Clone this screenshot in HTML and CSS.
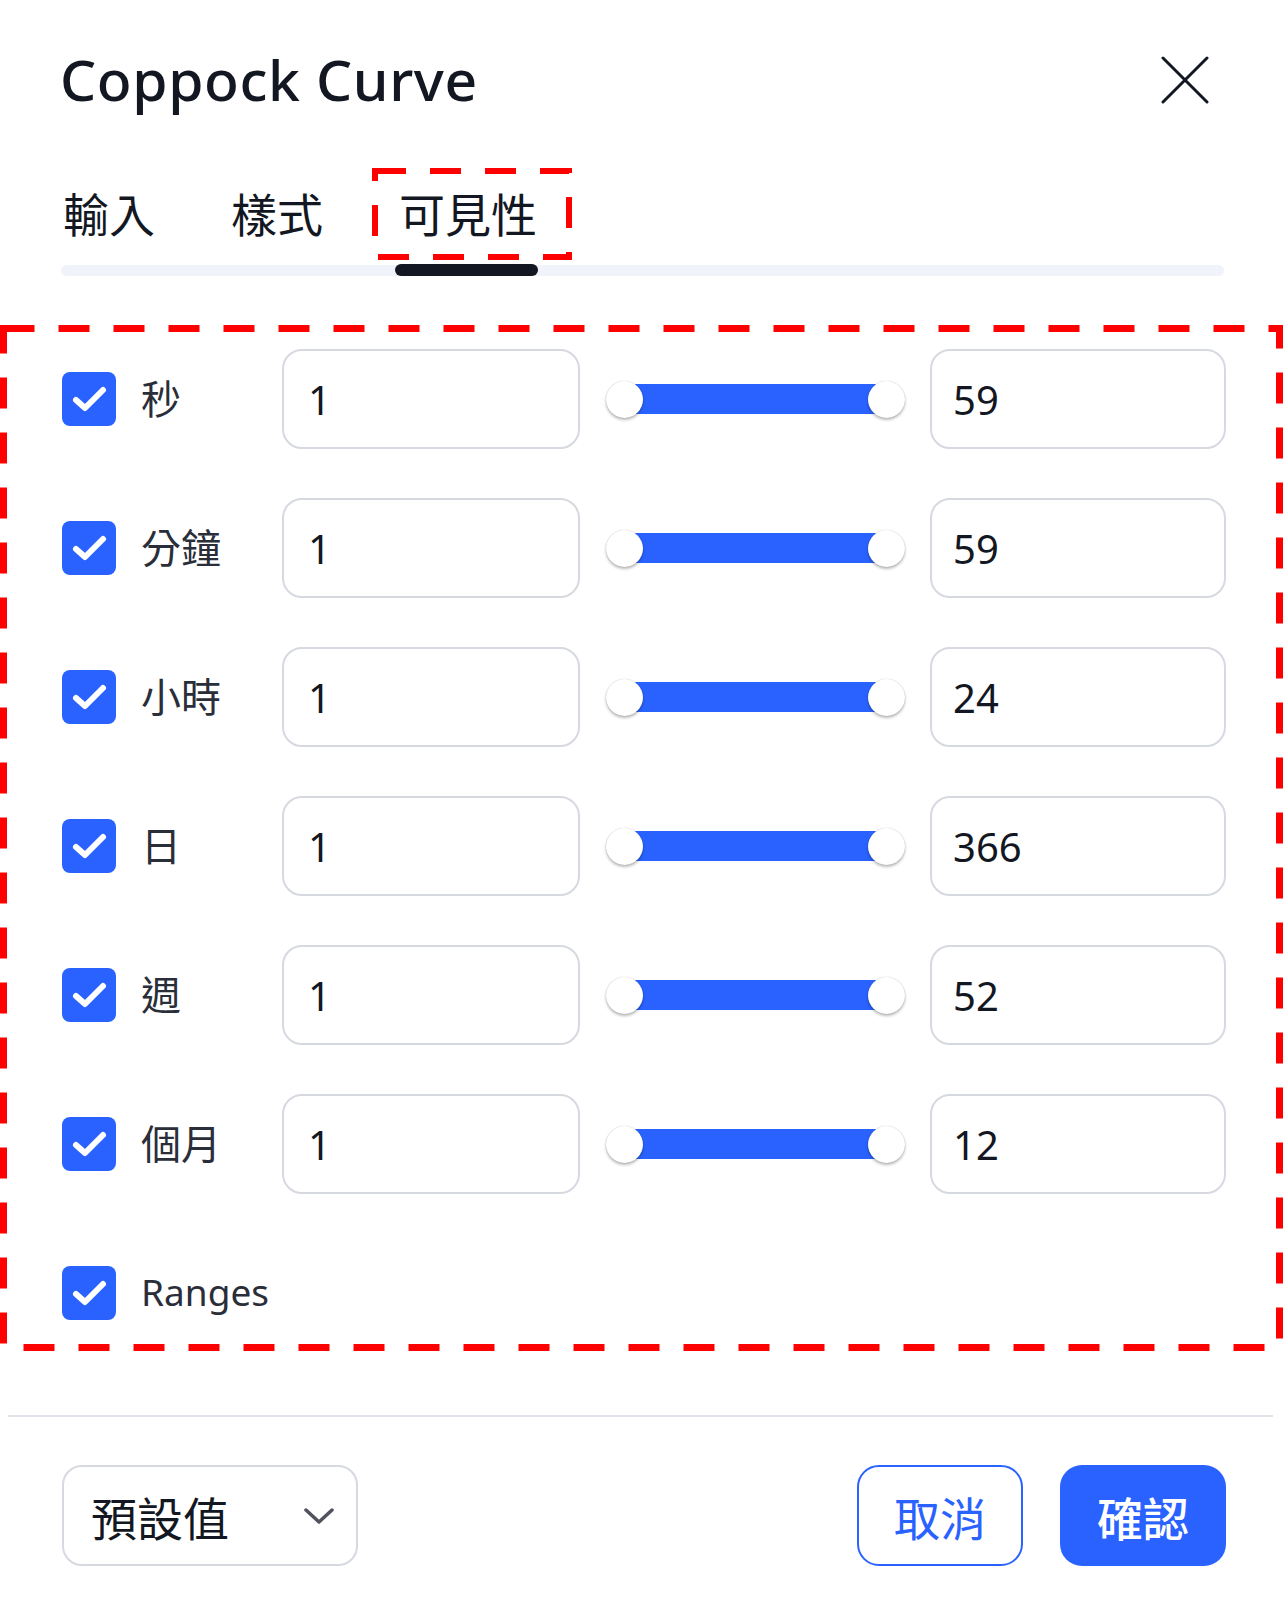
FILE: index.html
```html
<!DOCTYPE html>
<html lang="zh-Hant">
<head>
<meta charset="utf-8">
<title>Coppock Curve</title>
<link rel="stylesheet" href="styles.css">
</head>
<body>
<div class="dialog">
  <header class="header">
    <h1 class="title">Coppock Curve</h1>
    <button class="close" aria-label="close">
      <svg width="48" height="48" viewBox="0 0 48 48"><path d="M2 2 L46 46 M46 2 L2 46" stroke="#131722" stroke-width="3" stroke-linecap="round" fill="none"/></svg>
    </button>
  </header>

  <nav class="tabs">
    <div class="tab">輸入</div>
    <div class="tab">樣式</div>
    <div class="tab active">可見性
      <svg class="annot annot-tab" width="200" height="92" viewBox="0 0 200 92"><rect x="3" y="3" width="194" height="86" fill="none" stroke="#ff0000" stroke-width="6" stroke-dasharray="31 24"/></svg>
    </div>
  </nav>

  <section class="rows">
    <svg class="annot annot-rows" width="1283" height="1026" viewBox="0 0 1283 1026"><rect x="3.5" y="3.5" width="1276" height="1019" fill="none" stroke="#ff0000" stroke-width="7" stroke-dasharray="31 24"/></svg>

    <div class="row">
      <span class="check"><svg width="54" height="54" viewBox="0 0 54 54"><path d="M14 28 L23 36 L41 18" stroke="#fff" stroke-width="6" fill="none" stroke-linecap="round" stroke-linejoin="round"/></svg></span>
      <span class="label">秒</span>
      <div class="field">1</div>
      <div class="slider"><span class="knob"></span><span class="bar"></span><span class="knob"></span></div>
      <div class="field field-right">59</div>
    </div>

    <div class="row">
      <span class="check"><svg width="54" height="54" viewBox="0 0 54 54"><path d="M14 28 L23 36 L41 18" stroke="#fff" stroke-width="6" fill="none" stroke-linecap="round" stroke-linejoin="round"/></svg></span>
      <span class="label">分鐘</span>
      <div class="field">1</div>
      <div class="slider"><span class="knob"></span><span class="bar"></span><span class="knob"></span></div>
      <div class="field field-right">59</div>
    </div>

    <div class="row">
      <span class="check"><svg width="54" height="54" viewBox="0 0 54 54"><path d="M14 28 L23 36 L41 18" stroke="#fff" stroke-width="6" fill="none" stroke-linecap="round" stroke-linejoin="round"/></svg></span>
      <span class="label">小時</span>
      <div class="field">1</div>
      <div class="slider"><span class="knob"></span><span class="bar"></span><span class="knob"></span></div>
      <div class="field field-right">24</div>
    </div>

    <div class="row">
      <span class="check"><svg width="54" height="54" viewBox="0 0 54 54"><path d="M14 28 L23 36 L41 18" stroke="#fff" stroke-width="6" fill="none" stroke-linecap="round" stroke-linejoin="round"/></svg></span>
      <span class="label">日</span>
      <div class="field">1</div>
      <div class="slider"><span class="knob"></span><span class="bar"></span><span class="knob"></span></div>
      <div class="field field-right">366</div>
    </div>

    <div class="row">
      <span class="check"><svg width="54" height="54" viewBox="0 0 54 54"><path d="M14 28 L23 36 L41 18" stroke="#fff" stroke-width="6" fill="none" stroke-linecap="round" stroke-linejoin="round"/></svg></span>
      <span class="label">週</span>
      <div class="field">1</div>
      <div class="slider"><span class="knob"></span><span class="bar"></span><span class="knob"></span></div>
      <div class="field field-right">52</div>
    </div>

    <div class="row">
      <span class="check"><svg width="54" height="54" viewBox="0 0 54 54"><path d="M14 28 L23 36 L41 18" stroke="#fff" stroke-width="6" fill="none" stroke-linecap="round" stroke-linejoin="round"/></svg></span>
      <span class="label">個月</span>
      <div class="field">1</div>
      <div class="slider"><span class="knob"></span><span class="bar"></span><span class="knob"></span></div>
      <div class="field field-right">12</div>
    </div>

    <div class="row row-ranges">
      <span class="check"><svg width="54" height="54" viewBox="0 0 54 54"><path d="M14 28 L23 36 L41 18" stroke="#fff" stroke-width="6" fill="none" stroke-linecap="round" stroke-linejoin="round"/></svg></span>
      <span class="label label-latin">Ranges</span>
    </div>
  </section>

  <div class="sep"></div>

  <footer class="footer">
    <div class="select">
      <span>預設值</span>
      <svg width="30" height="18" viewBox="0 0 30 18"><path d="M2 3 L15 15 L28 3" stroke="#50535e" stroke-width="3.5" fill="none" stroke-linecap="round" stroke-linejoin="round"/></svg>
    </div>
    <div class="actions">
      <button class="btn btn-outline">取消</button>
      <button class="btn btn-primary">確認</button>
    </div>
  </footer>
</div>
</body>
</html>
```
FILE: styles.css
```css
* { box-sizing: border-box; }

html, body {
  margin: 0;
  padding: 0;
  background: #ffffff;
}

body {
  font-family: "Noto Sans", "Noto Sans CJK TC", sans-serif;
  color: #131722;
}

.dialog {
  width: 1283px;
  height: 1600px;
  overflow: hidden;
}

/* header */
.header {
  height: 160px;
  display: flex;
  align-items: center;
  justify-content: space-between;
  padding: 0 74px 0 60px;
}

.title {
  margin: 0;
  font-size: 57px;
  line-height: 57px;
  font-weight: 500;
  letter-spacing: 0.6px;
  color: #131722;
  padding-bottom: 2px;
}

.close {
  width: 48px;
  height: 48px;
  padding: 0;
  border: 0;
  background: transparent;
  display: flex;
}

/* tabs */
.tabs {
  margin: 31px 59px 0 61px;
  padding-bottom: 39px;
  display: flex;
  gap: 76px;
  position: relative;
}

.tabs::after {
  content: "";
  position: absolute;
  left: 0;
  right: 0;
  bottom: 0;
  height: 11px;
  border-radius: 6px;
  background: #f0f3fa;
}

.tab {
  position: relative;
  font-size: 46px;
  line-height: 46px;
  height: 46px;
  color: #131722;
  white-space: nowrap;
}

.tab:first-child { margin-left: 2px; }

.tab.active::after {
  content: "";
  position: absolute;
  left: -4px;
  right: -1px;
  bottom: -39px;
  height: 12px;
  border-radius: 6px;
  background: #131722;
  z-index: 1;
}

.annot {
  position: absolute;
  pointer-events: none;
  z-index: 5;
}

.annot-tab {
  left: -27px;
  top: -23px;
}

/* rows */
.rows {
  position: relative;
  margin-top: 49px;
  padding: 24px 57px 31px 62px;
  display: flex;
  flex-direction: column;
  gap: 49px;
}

.annot-rows {
  left: 0;
  top: 0;
}

.row {
  display: flex;
  align-items: center;
  height: 100px;
}

.row-ranges {
  height: 54px;
  margin-top: 23px;
}

.check {
  flex: 0 0 54px;
  width: 54px;
  height: 54px;
  border-radius: 8px;
  background: #2962ff;
  display: flex;
  margin-right: 25px;
}

.label {
  flex: 0 0 141px;
  font-size: 40px;
  line-height: 54px;
  color: #2a2e39;
}

.label-latin {
  font-size: 37px;
  padding-bottom: 2px;
}

.field {
  flex: 0 0 298px;
  height: 100px;
  border: 2px solid #d6d9e0;
  border-radius: 20px;
  padding-left: 24px;
  display: flex;
  align-items: center;
  font-size: 40px;
  color: #131722;
}

.field-right {
  flex-basis: 296px;
  padding-left: 21px;
}

.slider {
  flex: 0 0 299px;
  margin: 0 25px 0 26px;
  display: flex;
  align-items: center;
}

.knob {
  position: relative;
  z-index: 1;
  flex: 0 0 37px;
  width: 37px;
  height: 37px;
  border-radius: 50%;
  background: #ffffff;
  box-shadow: 0 2px 3px rgba(0, 0, 0, 0.28), 0 0 1px rgba(0, 0, 0, 0.25);
}

.bar {
  flex: 1;
  height: 30px;
  margin: 0 -8px;
  background: #2962ff;
}

/* separator */
.sep {
  height: 2px;
  margin: 64px 10px 0 8px;
  background: #e0e3eb;
}

/* footer */
.footer {
  display: flex;
  align-items: center;
  justify-content: space-between;
  padding: 48px 57px 0 62px;
}

.select {
  width: 296px;
  height: 101px;
  border: 2px solid #d6d9e0;
  border-radius: 20px;
  display: flex;
  align-items: center;
  justify-content: space-between;
  padding: 0 22px 0 27px;
  font-size: 46px;
  color: #131722;
}

.actions {
  display: flex;
  gap: 37px;
}

.btn {
  width: 166px;
  height: 101px;
  border-radius: 22px;
  font-family: "Noto Sans", "Noto Sans CJK TC", sans-serif;
  font-size: 46px;
  padding: 0;
  display: flex;
  align-items: center;
  justify-content: center;
}

.btn-outline {
  background: #ffffff;
  border: 2px solid #2962ff;
  color: #2962ff;
}

.btn-primary {
  background: #2962ff;
  border: 0;
  color: #ffffff;
  font-weight: 500;
}
```
